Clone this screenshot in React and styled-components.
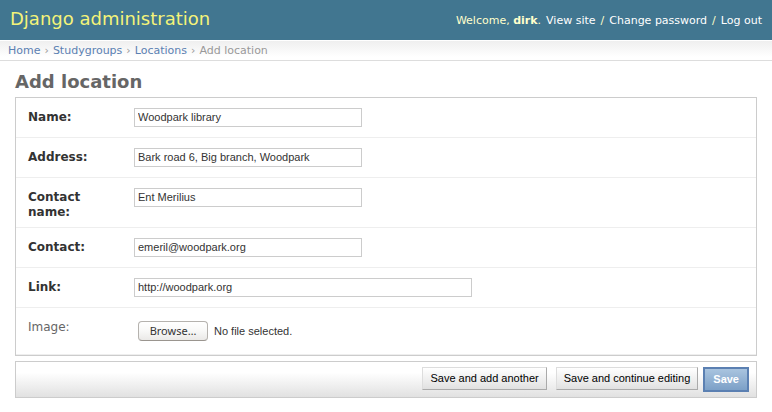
import React from "react";
import styled, { createGlobalStyle } from "styled-components";

const sans = `"DejaVu Sans", Verdana, sans-serif`;
const control = `"Liberation Sans", Arial, sans-serif`;

const GlobalStyle = createGlobalStyle`
  *, *::before, *::after { box-sizing: border-box; }
  body {
    margin: 0;
    background: #fff;
    color: #333;
    font: 12px/15px ${sans};
  }
`;

const Header = styled.header`
  display: flex;
  align-items: center;
  justify-content: space-between;
  min-height: 40px;
  padding: 0 10px;
  background: #417690;
  color: #ffc;
`;

const Branding = styled.h1`
  margin: 0;
  padding-bottom: 2px;
  color: #f4f379;
  font-size: 18px;
  font-weight: normal;
  line-height: 22px;
`;

const UserTools = styled.nav`
  display: flex;
  gap: 5px;
  font-size: 11px;
`;

const ToolLink = styled.a`
  color: #fff;
  text-decoration: none;
`;

const Breadcrumbs = styled.nav`
  display: flex;
  gap: 4px;
  padding: 3px 8px 2px;
  border-top: 1px solid #fff;
  border-bottom: 1px solid #ddd;
  background: linear-gradient(#efefef, #fff 16px);
  color: #999;
  font-size: 11px;
  line-height: 14px;
`;

const Crumb = styled.a`
  color: #5b80b2;
  text-decoration: none;
`;

const Content = styled.main`
  padding: 10px 15px;
`;

const Title = styled.h2`
  margin: 0 0 4px;
  color: #666;
  font-size: 18px;
  font-weight: bold;
  line-height: 22px;
`;

const Fieldset = styled.div`
  margin-bottom: 5px;
  border: 1px solid #ccc;
`;

const Row = styled.div`
  display: flex;
  align-items: flex-start;
  padding: 10px 12px 7px;
  border-bottom: 1px solid #eee;
`;

const Label = styled.label`
  flex: none;
  width: 106px;
  padding: 2px 24px 0 0;
  color: ${(p) => (p.$required ? "#333" : "#666")};
  font-weight: ${(p) => (p.$required ? "bold" : "normal")};
`;

const TextInput = styled.input`
  width: ${(p) => (p.$wide ? 338 : 228)}px;
  max-width: 100%;
  min-width: 0;
  height: 19px;
  margin-bottom: 3px;
  padding: 1px 3px 2px;
  border: 1px solid #ccc;
  border-radius: 0;
  background: #fff;
  color: #333;
  font: 11px/14px ${control};
`;

const FilePicker = styled.div`
  position: relative;
  display: flex;
  align-items: center;
  gap: 6px;
  margin: 3px 4px 6px;
  font: 11px/14px ${control};
`;

const FileInput = styled.input`
  position: absolute;
  inset: 0;
  width: 100%;
  height: 100%;
  opacity: 0;
  cursor: pointer;
`;

const BrowseFace = styled.span`
  width: 70px;
  height: 20px;
  border: 1px solid #b5b2ae;
  border-bottom-color: #9a958f;
  border-radius: 4px;
  background: linear-gradient(#fff, #f8f8f7 50%, #eae9e7);
  font: 11px/18px "Noto Sans", "Open Sans", sans-serif;
  text-align: center;
`;

const SubmitRow = styled.div`
  display: flex;
  align-items: flex-start;
  justify-content: flex-end;
  padding: 5px 7px;
  border: 1px solid #ccc;
  background: linear-gradient(#fff 30%, #e1e1e1);
`;

const Button = styled.button`
  margin-right: 9px;
  padding: 3px 7px 4px;
  border: 1px solid;
  border-color: #ddd #aaa #aaa #ddd;
  border-radius: 0;
  background: linear-gradient(#fff, #e1e1e1);
  color: #000;
  font: 11px/14px ${control};
  white-space: nowrap;
`;

const DefaultButton = styled(Button)`
  margin: 0 0 0 -4px;
  padding: 3px 8px 4px;
  border: 2px solid #5b80b2;
  background: linear-gradient(#a9c4df, #7ca0c7);
  color: #fff;
  font-weight: bold;
`;

const fields = [
  { id: "name", label: "Name:", value: "Woodpark library" },
  { id: "address", label: "Address:", value: "Bark road 6, Big branch, Woodpark" },
  { id: "contact_name", label: "Contact name:", value: "Ent Merilius" },
  { id: "contact", label: "Contact:", value: "emeril@woodpark.org" },
  { id: "link", label: "Link:", value: "http://woodpark.org", wide: true },
];

export default function App() {
  return (
    <>
      <GlobalStyle />
      <Header>
        <Branding>Django administration</Branding>
        <UserTools>
          <span>Welcome, <strong>dirk</strong>.</span>
          <ToolLink href="#site">View site</ToolLink>
          <span>/</span>
          <ToolLink href="#password">Change password</ToolLink>
          <span>/</span>
          <ToolLink href="#logout">Log out</ToolLink>
        </UserTools>
      </Header>
      <Breadcrumbs>
        <Crumb href="#home">Home</Crumb>
        <span>›</span>
        <Crumb href="#studygroups">Studygroups</Crumb>
        <span>›</span>
        <Crumb href="#locations">Locations</Crumb>
        <span>›</span>
        <span>Add location</span>
      </Breadcrumbs>
      <Content>
        <Title>Add location</Title>
        <form onSubmit={(e) => e.preventDefault()}>
          <Fieldset>
            {fields.map((f) => (
              <Row key={f.id}>
                <Label htmlFor={f.id} $required>{f.label}</Label>
                <TextInput id={f.id} name={f.id} type="text" defaultValue={f.value} $wide={f.wide} />
              </Row>
            ))}
            <Row>
              <Label htmlFor="image">Image:</Label>
              <FilePicker>
                <BrowseFace aria-hidden="true">Browse…</BrowseFace>
                <span>No file selected.</span>
                <FileInput id="image" name="image" type="file" />
              </FilePicker>
            </Row>
          </Fieldset>
          <SubmitRow>
            <Button type="submit">Save and add another</Button>
            <Button type="submit">Save and continue editing</Button>
            <DefaultButton type="submit">Save</DefaultButton>
          </SubmitRow>
        </form>
      </Content>
    </>
  );
}
